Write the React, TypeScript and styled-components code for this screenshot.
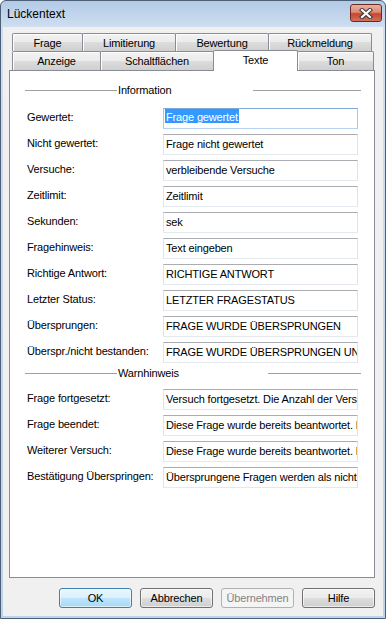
import { FC } from "react";
import styled, { createGlobalStyle } from "styled-components";

const GlobalStyle = createGlobalStyle`
  html, body {
    margin: 0;
    padding: 0;
    background: #fff;
  }
  body {
    font-family: "Liberation Sans", Arial, sans-serif;
    font-size: 11px;
    letter-spacing: -0.15px;
    color: #000;
  }
`;

const Window = styled.div`
  box-sizing: border-box;
  width: 386px;
  height: 619px;
  display: flex;
  flex-direction: column;
  padding: 0 2px 2px;
  border: 1px solid #4c5f75;
  border-radius: 6px 6px 0 0;
  background: linear-gradient(to bottom, #b2cae6 0, #cfdef0 26px, #bcd3ec 100%);
`;

const TitleBar = styled.div`
  display: flex;
  align-items: center;
  height: 26px;
  padding: 0 1px 0 4px;
`;

const Caption = styled.span`
  font-size: 12px;
  letter-spacing: 0;
`;

const CloseButton = styled.div`
  box-sizing: border-box;
  margin-left: auto;
  align-self: flex-start;
  margin-top: 3px;
  width: 32px;
  height: 18px;
  border: 1px solid #6e2a22;
  border-radius: 3px;
  background: linear-gradient(to bottom, #eab0a1 0%, #dc8b77 45%, #c7452f 55%, #d2725c 100%);
  display: flex;
  align-items: center;
  justify-content: center;
`;

const Client = styled.div`
  flex: 1;
  display: flex;
  flex-direction: column;
  background: #f0f0f0;
  padding: 6px 8px 8px 6px;
`;

const TabStrip = styled.div`
  display: flex;
  flex-direction: column;
  padding-left: 3px;
`;

const TabRow = styled.div<{ $h: number }>`
  display: flex;
  align-items: flex-start;
  height: ${(p) => p.$h}px;
`;

const Tab = styled.div<{ $w: number; $selected?: boolean }>`
  box-sizing: border-box;
  position: relative;
  z-index: ${(p) => (p.$selected ? 2 : 0)};
  width: ${(p) => p.$w}px;
  height: ${(p) => (p.$selected ? "calc(100% + 2px)" : "100%")};
  margin-top: ${(p) => (p.$selected ? -1 : 0)}px;
  border: 1px solid #898c95;
  border-bottom: none;
  border-radius: 2px 2px 0 0;
  background: ${(p) =>
    p.$selected
      ? "#fff"
      : "linear-gradient(to bottom, #f2f2f2 0%, #ebebeb 50%, #dddddd 50%, #cfcfcf 100%)"};
  box-shadow: ${(p) => (p.$selected ? "none" : "inset 1px 1px 0 #fff")};
  padding-top: 3px;
  line-height: 13px;
  text-align: center;
  white-space: nowrap;
  & + & {
    margin-left: -1px;
  }
`;

const Panel = styled.div`
  flex: 1;
  display: flex;
  flex-direction: column;
  background: #fff;
  border: 1px solid #898c95;
  padding: 13px 13px 0 15px;
`;

const Group = styled.section`
  display: flex;
  flex-direction: column;
  & + & {
    margin-top: 4px;
  }
`;

const GroupHeader = styled.div<{ $slot: number; $after: number }>`
  display: flex;
  align-items: center;
  height: 13px;
  line-height: 13px;
  margin-bottom: ${(p) => p.$after}px;
  &::before {
    content: "";
    width: 92px;
    height: 1px;
    background: #a0a0a0;
  }
  &::after {
    content: "";
    flex: 1;
    height: 1px;
    background: #a0a0a0;
  }
  > span {
    box-sizing: border-box;
    width: ${(p) => p.$slot}px;
    padding-left: 1px;
  }
`;

const Fields = styled.div`
  display: flex;
  flex-direction: column;
  gap: 5px;
`;

const Row = styled.div`
  display: grid;
  grid-template-columns: 136px 195px;
  align-items: center;
  height: 21px;
  margin-left: 2px;
`;

const Label = styled.span`
  padding-bottom: 3px;
  white-space: nowrap;
`;

const TextBox = styled.div<{ $focused?: boolean }>`
  box-sizing: border-box;
  height: 21px;
  border: 1px solid ${(p) => (p.$focused ? "#a9c8ea" : "#e2e3ea")};
  border-top-color: ${(p) => (p.$focused ? "#7fa9d6" : "#abadb3")};
  border-bottom-color: ${(p) => (p.$focused ? "#b7d3ef" : "#e3e9ef")};
  background: #fff;
  padding: 0 2px;
  line-height: 19px;
  white-space: nowrap;
  overflow: hidden;
`;

const Selection = styled.span`
  display: inline-block;
  vertical-align: top;
  height: 14px;
  line-height: 17px;
  overflow: hidden;
  margin-left: -1px;
  padding: 0 1px;
  background: #3399ff;
  color: #fff;
`;

const ButtonBar = styled.div`
  display: flex;
  justify-content: flex-end;
  gap: 8px;
  margin-top: 10px;
`;

const Button = styled.div<{ $variant?: "default" | "disabled" }>`
  box-sizing: border-box;
  width: 73px;
  height: 20px;
  border-radius: 3px;
  line-height: 18px;
  text-align: center;
  border: 1px solid
    ${(p) =>
      p.$variant === "default" ? "#3c7fb1" : p.$variant === "disabled" ? "#adb2b5" : "#707070"};
  color: ${(p) => (p.$variant === "disabled" ? "#838383" : "#000")};
  background: ${(p) =>
    p.$variant === "default"
      ? "linear-gradient(to bottom, #eaf6fd 0%, #d9f0fc 50%, #bee6fd 50%, #a7d9f5 100%)"
      : p.$variant === "disabled"
      ? "#f4f4f4"
      : "linear-gradient(to bottom, #f2f2f2 0%, #ebebeb 50%, #dddddd 50%, #cfcfcf 100%)"};
  box-shadow: ${(p) => (p.$variant === "disabled" ? "none" : "inset 0 0 0 1px rgba(255,255,255,0.6)")};
`;

const infoFields: [string, string][] = [
  ["Gewertet:", "Frage gewertet"],
  ["Nicht gewertet:", "Frage nicht gewertet"],
  ["Versuche:", "verbleibende Versuche"],
  ["Zeitlimit:", "Zeitlimit"],
  ["Sekunden:", "sek"],
  ["Fragehinweis:", "Text eingeben"],
  ["Richtige Antwort:", "RICHTIGE ANTWORT"],
  ["Letzter Status:", "LETZTER FRAGESTATUS"],
  ["Übersprungen:", "FRAGE WURDE ÜBERSPRUNGEN"],
  ["Überspr./nicht bestanden:", "FRAGE WURDE ÜBERSPRUNGEN UND NICHT BESTANDEN"],
];

const warnFields: [string, string][] = [
  ["Frage fortgesetzt:", "Versuch fortgesetzt. Die Anzahl der Versuche wurde verringert."],
  ["Frage beendet:", "Diese Frage wurde bereits beantwortet. Die Antwort kann nicht geändert werden."],
  ["Weiterer Versuch:", "Diese Frage wurde bereits beantwortet. Die Antwort kann nicht geändert werden."],
  ["Bestätigung Überspringen:", "Übersprungene Fragen werden als nicht beantwortet gewertet."],
];

const CloseIcon: FC = () => (
  <svg width="14" height="11" viewBox="0 0 14 11">
    <path d="M3 2 L11 9 M11 2 L3 9" stroke="#3a3a3a" strokeWidth="4.2" strokeLinecap="square" />
    <path d="M3 2 L11 9 M11 2 L3 9" stroke="#fff" strokeWidth="2.2" strokeLinecap="square" />
  </svg>
);

const App: FC = () => {
  return (
    <>
      <GlobalStyle />
      <Window>
        <TitleBar>
          <Caption>Lückentext</Caption>
          <CloseButton>
            <CloseIcon />
          </CloseButton>
        </TitleBar>
        <Client>
          <TabStrip>
            <TabRow $h={18}>
              <Tab $w={71}>Frage</Tab>
              <Tab $w={94}>Limitierung</Tab>
              <Tab $w={94}>Bewertung</Tab>
              <Tab $w={104}>Rückmeldung</Tab>
            </TabRow>
            <TabRow $h={19}>
              <Tab $w={89}>Anzeige</Tab>
              <Tab $w={114}>Schaltflächen</Tab>
              <Tab $w={85} $selected>
                Texte
              </Tab>
              <Tab $w={77}>Ton</Tab>
            </TabRow>
          </TabStrip>
          <Panel>
            <Group>
              <GroupHeader $slot={136} $after={11}>
                <span>Information</span>
              </GroupHeader>
              <Fields>
                {infoFields.map(([label, value], i) => (
                  <Row key={label}>
                    <Label>{label}</Label>
                    <TextBox $focused={i === 0}>
                      {i === 0 ? <Selection>{value}</Selection> : value}
                    </TextBox>
                  </Row>
                ))}
              </Fields>
            </Group>
            <Group>
              <GroupHeader $slot={151} $after={9}>
                <span>Warnhinweis</span>
              </GroupHeader>
              <Fields>
                {warnFields.map(([label, value]) => (
                  <Row key={label}>
                    <Label>{label}</Label>
                    <TextBox>{value}</TextBox>
                  </Row>
                ))}
              </Fields>
            </Group>
          </Panel>
          <ButtonBar>
            <Button $variant="default">OK</Button>
            <Button>Abbrechen</Button>
            <Button $variant="disabled">Übernehmen</Button>
            <Button>Hilfe</Button>
          </ButtonBar>
        </Client>
      </Window>
    </>
  );
};

export default App;
